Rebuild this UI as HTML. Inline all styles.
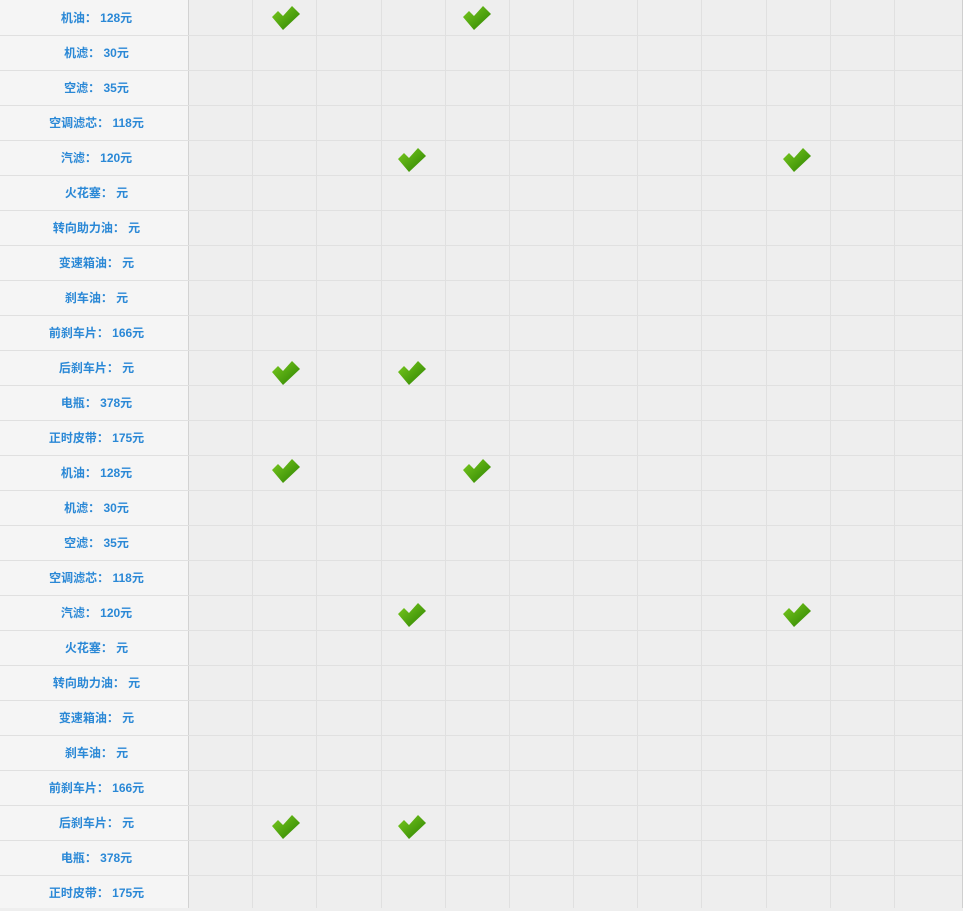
<!DOCTYPE html>
<html><head><meta charset="utf-8"><style>
body{margin:0;width:963px;height:908px;overflow:hidden;background:#eeeeee;position:relative;font-family:"Liberation Sans","Noto Sans CJK SC",sans-serif}
#left{position:absolute;left:0;top:0;width:188px;height:908px;background:#f5f5f5;border-right:1px solid #d2d2d2}
.r{position:absolute;left:0;width:183px;padding-left:5px;height:35px;line-height:36px;text-align:center;font-size:12px;font-weight:bold;color:#2a88d6}
.h{position:absolute;left:0;width:962px;height:1px;background:#e0e0e0}
.v{position:absolute;top:0;width:1px;height:908px;background:#e0e0e0}
.c{position:absolute;width:30px;height:25px}
</style></head><body>
<div id="left"></div>
<div id="g"></div>
<script>
var labels=["机油：&nbsp;128元","机滤：&nbsp;30元","空滤：&nbsp;35元","空调滤芯：&nbsp;118元","汽滤：&nbsp;120元","火花塞：&nbsp;元","转向助力油：&nbsp;元","变速箱油：&nbsp;元","刹车油：&nbsp;元","前刹车片：&nbsp;166元","后刹车片：&nbsp;元","电瓶：&nbsp;378元","正时皮带：&nbsp;175元"];
var h="";
for(var i=0;i<26;i++){var y=i*35;h+='<div class="r" style="top:'+y+'px">'+labels[i%13]+'</div>';if(i>0)h+='<div class="h" style="top:'+y+'px"></div>';}
var xs=[252,316,381,445,509,573,637,701,766,830,894];
for(var j=0;j<xs.length;j++)h+='<div class="v" style="left:'+xs[j]+'px"></div>';
h+='<div class="v" style="left:962px;background:#cfcfcf"></div>';
var checks=[[286,17],[477,17],[412,159],[797,159],[286,372],[412,372],[286,470],[477,470],[412,614],[797,614],[286,826],[412,826]];
for(var k=0;k<checks.length;k++){var cx=checks[k][0]-15,cy=checks[k][1]-12;
h+='<svg class="c" style="left:'+cx+'px;top:'+cy+'px" viewBox="0 0 30 25"><defs><linearGradient id="gg'+k+'" x1="0" y1="0" x2="1" y2="1"><stop offset="0" stop-color="#7ccc20"/><stop offset="1" stop-color="#2a8000"/></linearGradient></defs><polygon points="1,12 7,6 12,11 21,1 29,9 12,25" fill="url(#gg'+k+')"/></svg>';}
document.getElementById("g").innerHTML=h;
</script>
</body></html>
